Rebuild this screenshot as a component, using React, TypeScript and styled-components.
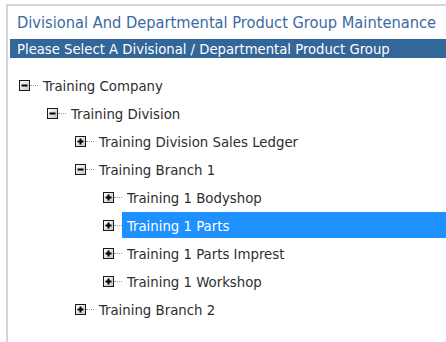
import React from 'react';
import styled, { createGlobalStyle } from 'styled-components';

const GlobalStyle = createGlobalStyle`
  html, body {
    margin: 0;
    padding: 0;
    background: #ffffff;
  }
  body {
    font-family: "DejaVu Sans Condensed", "DejaVu Sans", sans-serif;
    font-stretch: condensed;
  }
`;

type Node = {
  label: string;
  level: number;
  open?: boolean;
  selected?: boolean;
};

const nodes: Node[] = [
  { label: 'Training Company', level: 0, open: true },
  { label: 'Training Division', level: 1, open: true },
  { label: 'Training Division Sales Ledger', level: 2 },
  { label: 'Training Branch 1', level: 2, open: true },
  { label: 'Training 1 Bodyshop', level: 3 },
  { label: 'Training 1 Parts', level: 3, selected: true },
  { label: 'Training 1 Parts Imprest', level: 3 },
  { label: 'Training 1 Workshop', level: 3 },
  { label: 'Training Branch 2', level: 2 },
];

const Frame = styled.div`
  margin: 4px 0 0 6px;
  height: 338px;
  box-sizing: border-box;
  border-top: 2px solid #d6d6d6;
  border-left: 2px solid #d6d6d6;
  overflow: hidden;
`;

const Title = styled.div`
  height: 33px;
  padding-left: 9px;
  box-sizing: border-box;
  display: flex;
  align-items: center;
  color: #3a6a9f;
  font-size: 16.3px;
`;

const Banner = styled.div`
  margin-left: 2px;
  height: 19px;
  padding-left: 7px;
  display: flex;
  align-items: center;
  background: #336699;
  color: #ffffff;
  font-size: 14.7px;
`;

const Tree = styled.div`
  padding-top: 13px;
  display: flex;
  flex-direction: column;
`;

const Row = styled.div<{ $level: number }>`
  height: 28px;
  display: flex;
  align-items: center;
  padding-left: ${(p) => 11 + p.$level * 28}px;
`;

const Dots = styled.span`
  width: 8px;
  height: 0;
  border-top: 1px dotted #9a9a9a;
  flex: none;
`;

const Label = styled.span<{ $selected?: boolean }>`
  height: 26px;
  display: flex;
  align-items: center;
  padding: 0 5px;
  font-size: 14.8px;
  color: ${(p) => (p.$selected ? '#ffffff' : '#2e2e2e')};
  background: ${(p) => (p.$selected ? '#1e90ff' : 'transparent')};
  flex: ${(p) => (p.$selected ? 1 : 'none')};
  white-space: nowrap;
`;

const Toggle = ({ open }: { open?: boolean }) => (
  <svg width="11" height="11" viewBox="0 0 11 11" style={{ flex: 'none' }}>
    <defs>
      <linearGradient id="tg" x1="0" y1="0" x2="1" y2="1">
        <stop offset="0" stopColor="#ffffff" />
        <stop offset="1" stopColor="#c4c4c4" />
      </linearGradient>
    </defs>
    <rect x="0.5" y="0.5" width="10" height="10" fill="url(#tg)" stroke="#1a1a1a" />
    <rect x="2.5" y="4.5" width="6" height="2" fill="#000000" />
    {!open && <rect x="4.5" y="2.5" width="2" height="6" fill="#000000" />}
  </svg>
);

export default function App() {
  return (
    <>
      <GlobalStyle />
      <Frame>
        <Title>Divisional And Departmental Product Group Maintenance</Title>
        <Banner>Please Select A Divisional / Departmental Product Group</Banner>
        <Tree>
          {nodes.map((n) => (
            <Row key={n.label} $level={n.level}>
              <Toggle open={n.open} />
              <Dots />
              <Label $selected={n.selected}>{n.label}</Label>
            </Row>
          ))}
        </Tree>
      </Frame>
    </>
  );
}
